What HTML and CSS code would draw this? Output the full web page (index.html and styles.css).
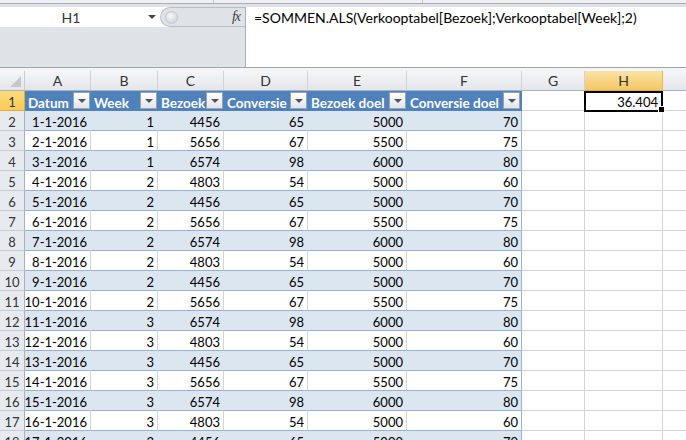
FILE: index.html
```html
<!DOCTYPE html>
<html>
<head>
<meta charset="utf-8">
<link rel="stylesheet" href="styles.css">
</head>
<body>
<div class="topedge"><span class="seg1"></span><span class="seg2"></span></div>
<div class="topgap"></div>
<div class="fbar">
  <div class="fleft">
    <div class="namerow">
      <div class="namebox"><span class="nametext">H1</span><i class="dd"></i></div>
      <div class="fctl"><span class="grip"></span><span class="fx">fx</span></div>
    </div>
  </div>
  <div class="finput">=SOMMEN.ALS(Verkooptabel[Bezoek];Verkooptabel[Week];2)</div>
</div>
<div class="spacer"></div>
<div class="sheet">
  <div class="corner"><i class="tri"></i></div>
  <div class="ch">A</div><div class="ch">B</div><div class="ch">C</div><div class="ch">D</div><div class="ch">E</div><div class="ch">F</div><div class="ch">G</div><div class="ch sel">H</div><div class="ch"></div>

  <div class="rh sel">1</div>
  <div class="th"><span>Datum</span><i class="fb"><b></b></i></div>
  <div class="th"><span>Week</span><i class="fb"><b></b></i></div>
  <div class="th"><span>Bezoek</span><i class="fb"><b></b></i></div>
  <div class="th"><span>Conversie</span><i class="fb"><b></b></i></div>
  <div class="th"><span>Bezoek doel</span><i class="fb"><b></b></i></div>
  <div class="th last"><span>Conversie doel</span><i class="fb"><b></b></i></div>
  <div class="gc"></div>
  <div class="gc active"><span>36.404</span><i class="selbox"></i><i class="handle"></i></div>
  <div class="gc"></div>

  <div class="rh">2</div><div class="td b">1-1-2016</div><div class="td b">1</div><div class="td b">4456</div><div class="td b">65</div><div class="td b">5000</div><div class="td f b">70</div><div class="gc"></div><div class="gc"></div><div class="gc"></div>
  <div class="rh">3</div><div class="td">2-1-2016</div><div class="td">1</div><div class="td">5656</div><div class="td">67</div><div class="td">5500</div><div class="td f">75</div><div class="gc"></div><div class="gc"></div><div class="gc"></div>
  <div class="rh">4</div><div class="td b">3-1-2016</div><div class="td b">1</div><div class="td b">6574</div><div class="td b">98</div><div class="td b">6000</div><div class="td f b">80</div><div class="gc"></div><div class="gc"></div><div class="gc"></div>
  <div class="rh">5</div><div class="td">4-1-2016</div><div class="td">2</div><div class="td">4803</div><div class="td">54</div><div class="td">5000</div><div class="td f">60</div><div class="gc"></div><div class="gc"></div><div class="gc"></div>
  <div class="rh">6</div><div class="td b">5-1-2016</div><div class="td b">2</div><div class="td b">4456</div><div class="td b">65</div><div class="td b">5000</div><div class="td f b">70</div><div class="gc"></div><div class="gc"></div><div class="gc"></div>
  <div class="rh">7</div><div class="td">6-1-2016</div><div class="td">2</div><div class="td">5656</div><div class="td">67</div><div class="td">5500</div><div class="td f">75</div><div class="gc"></div><div class="gc"></div><div class="gc"></div>
  <div class="rh">8</div><div class="td b">7-1-2016</div><div class="td b">2</div><div class="td b">6574</div><div class="td b">98</div><div class="td b">6000</div><div class="td f b">80</div><div class="gc"></div><div class="gc"></div><div class="gc"></div>
  <div class="rh">9</div><div class="td">8-1-2016</div><div class="td">2</div><div class="td">4803</div><div class="td">54</div><div class="td">5000</div><div class="td f">60</div><div class="gc"></div><div class="gc"></div><div class="gc"></div>
  <div class="rh">10</div><div class="td b">9-1-2016</div><div class="td b">2</div><div class="td b">4456</div><div class="td b">65</div><div class="td b">5000</div><div class="td f b">70</div><div class="gc"></div><div class="gc"></div><div class="gc"></div>
  <div class="rh">11</div><div class="td">10-1-2016</div><div class="td">2</div><div class="td">5656</div><div class="td">67</div><div class="td">5500</div><div class="td f">75</div><div class="gc"></div><div class="gc"></div><div class="gc"></div>
  <div class="rh">12</div><div class="td b">11-1-2016</div><div class="td b">3</div><div class="td b">6574</div><div class="td b">98</div><div class="td b">6000</div><div class="td f b">80</div><div class="gc"></div><div class="gc"></div><div class="gc"></div>
  <div class="rh">13</div><div class="td">12-1-2016</div><div class="td">3</div><div class="td">4803</div><div class="td">54</div><div class="td">5000</div><div class="td f">60</div><div class="gc"></div><div class="gc"></div><div class="gc"></div>
  <div class="rh">14</div><div class="td b">13-1-2016</div><div class="td b">3</div><div class="td b">4456</div><div class="td b">65</div><div class="td b">5000</div><div class="td f b">70</div><div class="gc"></div><div class="gc"></div><div class="gc"></div>
  <div class="rh">15</div><div class="td">14-1-2016</div><div class="td">3</div><div class="td">5656</div><div class="td">67</div><div class="td">5500</div><div class="td f">75</div><div class="gc"></div><div class="gc"></div><div class="gc"></div>
  <div class="rh">16</div><div class="td b">15-1-2016</div><div class="td b">3</div><div class="td b">6574</div><div class="td b">98</div><div class="td b">6000</div><div class="td f b">80</div><div class="gc"></div><div class="gc"></div><div class="gc"></div>
  <div class="rh">17</div><div class="td">16-1-2016</div><div class="td">3</div><div class="td">4803</div><div class="td">54</div><div class="td">5000</div><div class="td f">60</div><div class="gc"></div><div class="gc"></div><div class="gc"></div>
  <div class="rh">18</div><div class="td b">17-1-2016</div><div class="td b">3</div><div class="td b">4456</div><div class="td b">65</div><div class="td b">5000</div><div class="td f b">70</div><div class="gc"></div><div class="gc"></div><div class="gc"></div>
</div>
</body>
</html>
```

FILE: styles.css
```css
html, body {
  margin: 0;
  padding: 0;
}
body {
  width: 686px;
  height: 440px;
  overflow: hidden;
  background: #ffffff;
  font-family: Lato, "Liberation Sans", sans-serif;
  font-size: 13px;
  color: #000;
}
.topedge {
  height: 3px;
  background: #eef0f3;
  border-bottom: 1px solid #a9aeb5;
  display: flex;
}
.topedge .seg1 {
  width: 213px;
  border-right: 1px solid #c3c7cc;
}
.topedge .seg2 {
  width: 208px;
  border-right: 1px solid #c3c7cc;
}
.topgap {
  height: 3px;
  background: #dfe3e8;
}
.fbar {
  display: flex;
  height: 60px;
  background: #dfe3e8;
  border-bottom: 1px solid #a0a5ac;
}
.fleft {
  width: 245px;
}
.namerow {
  display: flex;
  height: 20px;
  background: #fff;
}
.namebox {
  width: 160px;
  display: flex;
  align-items: center;
  color: #333;
}
.nametext {
  width: 142px;
  text-align: center;
  font-size: 14px;
}
.dd {
  margin-left: 6px;
  width: 0;
  height: 0;
  border-left: 4px solid transparent;
  border-right: 4px solid transparent;
  border-top: 4px solid #444;
}
.fctl {
  flex: 1;
  display: flex;
  align-items: center;
  justify-content: space-between;
  background: #dfe3e8;
  border: 1px solid #b9bec5;
  border-right: none;
  border-radius: 10px 0 0 10px;
  padding: 0 5px 0 4px;
}
.grip {
  width: 11px;
  height: 11px;
  border-radius: 50%;
  background: radial-gradient(circle at 40% 35%, #f6f7f8, #c6cad0);
  border: 1px solid #c3c7cc;
}
.fx {
  font-family: "Liberation Serif", serif;
  font-style: italic;
  font-size: 14px;
  color: #444;
  letter-spacing: -1px;
}
.finput {
  flex: 1;
  background: #fff;
  border-left: 1px solid #a9aeb5;
  padding: 3px 0 0 8px;
  line-height: 16px;
  font-size: 14px;
}
.spacer {
  height: 3px;
  background: #f3f4f6;
}
.sheet {
  display: grid;
  grid-template-columns: 25px 66px 67px 66px 84px 99px 115px 63px 78px 90px;
  grid-template-rows: 20px;
  grid-auto-rows: 20px;
}
.sheet > div {
  box-sizing: border-box;
  line-height: 16px;
  white-space: nowrap;
  overflow: hidden;
}
.corner {
  background: linear-gradient(#f5f6f8, #e3e6ea);
  border-right: 1px solid #c9ced5;
  border-bottom: 1px solid #a9b3bf;
  display: flex;
  justify-content: flex-end;
  align-items: flex-end;
  padding: 0 3px 3px 0;
}
.tri {
  width: 0;
  height: 0;
  border-left: 11px solid transparent;
  border-bottom: 11px solid #c4c8ce;
}
.ch {
  background: linear-gradient(#f5f6f8, #e3e6ea);
  border-right: 1px solid #cfd3d9;
  border-bottom: 1px solid #a9b3bf;
  display: flex;
  align-items: center;
  justify-content: center;
  color: #333;
  font-size: 14px;
}
.ch.sel {
  background: linear-gradient(#fbe3a6, #f3c664);
  border-right-color: #f0b54a;
  border-bottom-color: #e6a93a;
}
.rh {
  background: #e7eaee;
  border-right: 1px solid #a9b3bf;
  border-bottom: 1px solid #c6ccd4;
  display: flex;
  align-items: flex-end;
  justify-content: center;
  color: #333;
}
.rh.sel {
  background: linear-gradient(#fcdc7a, #f8cc55);
  border-bottom-color: #e6a93a;
  border-right-color: #e6a93a;
}
.th {
  background: #4f81bd;
  color: #fff;
  font-weight: bold;
  font-size: 13.5px;
  display: flex;
  align-items: flex-end;
  justify-content: space-between;
  padding: 0 1px 0 3px;
}
.th.last {
  border-right: 1px solid #4f81bd;
}
.th span {
  overflow: hidden;
}
.fb {
  align-self: flex-start;
  margin-top: 1px;
  flex: none;
  width: 17px;
  height: 17px;
  box-sizing: border-box;
  border: 1px solid #9aa4b0;
  background: linear-gradient(#ffffff, #e2e5e9);
  display: flex;
  align-items: center;
  justify-content: center;
}
.fb b {
  width: 0;
  height: 0;
  border-left: 4px solid transparent;
  border-right: 4px solid transparent;
  border-top: 4px solid #555;
}
.td {
  display: flex;
  align-items: flex-end;
  justify-content: flex-end;
  padding-right: 3px;
  border-right: 1px solid #d4d4d4;
  border-bottom: 1px solid #95b3d7;
}
.td.b {
  background: #dce6f1;
  border-right-color: #dce6f1;
}
.td.f {
  border-right-color: #95b3d7;
}
.gc {
  border-right: 1px solid #d4d4d4;
  border-bottom: 1px solid #d4d4d4;
  display: flex;
  align-items: flex-end;
  justify-content: flex-end;
}
.gc.active {
  position: relative;
  overflow: visible;
  padding-right: 4px;
}
.selbox {
  position: absolute;
  left: -1px;
  top: 0;
  width: 79px;
  height: 21px;
  box-sizing: border-box;
  border: 2px solid #000;
}
.handle {
  position: absolute;
  right: -3px;
  bottom: -3px;
  width: 5px;
  height: 5px;
  background: #000;
  border: 1px solid #fff;
}
```
